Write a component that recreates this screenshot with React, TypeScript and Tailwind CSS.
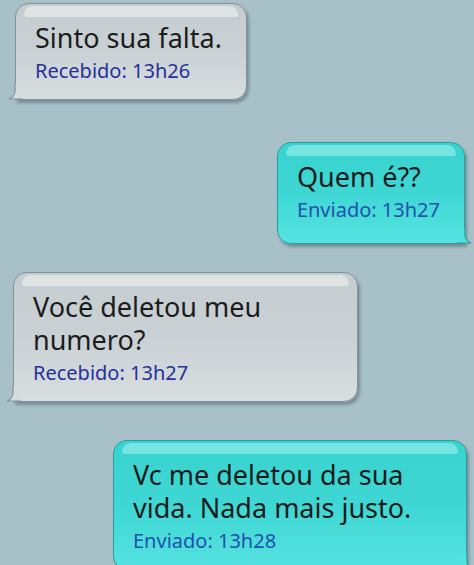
import React from 'react'

type Msg = {
  lines: string[]
  meta: string
  sent: boolean
  width?: string
  pad?: string
}

const messages: Msg[] = [
  { lines: ['Sinto sua falta.'], meta: 'Recebido: 13h26', sent: false },
  { lines: ['Quem é??'], meta: 'Enviado: 13h27', sent: true, pad: 'pb-[20px]' },
  { lines: ['Você deletou meu', 'numero?'], meta: 'Recebido: 13h27', sent: false, width: 'w-[345px]' },
  { lines: ['Vc me deletou da sua', 'vida. Nada mais justo.'], meta: 'Enviado: 13h28', sent: true, width: 'w-[354px]' },
]

function Tail({ sent }: { sent: boolean }) {
  const fill = sent ? '#52e2df' : '#d6dcde'
  const stroke = sent ? '#2a9c9e' : '#7f9399'
  if (sent) {
    return (
      <svg className="absolute -right-[8px] bottom-[-1px]" width="15" height="16" viewBox="0 0 15 16">
        <path d="M0 0 L8 0 L8 8 Q9 13 14 15 L0 15 Z" fill={fill} />
        <path d="M8 0 L8 8 Q9 13 14 15 L0 15" fill="none" stroke={stroke} strokeWidth="1.2" />
      </svg>
    )
  }
  return (
    <svg className="absolute -left-[8px] bottom-[-1px]" width="15" height="16" viewBox="0 0 15 16">
      <path d="M15 0 L7 0 L7 8 Q6 13 1 15 L15 15 Z" fill={fill} />
      <path d="M7 0 L7 8 Q6 13 1 15 L15 15" fill="none" stroke={stroke} strokeWidth="1.2" />
    </svg>
  )
}

function Bubble({ msg }: { msg: Msg }) {
  const base = msg.sent
    ? 'bg-gradient-to-b from-[#38d2cf] via-[#3ed7d4] to-[#55e3e0] border-[#2a9c9e] rounded-br-none'
    : 'bg-gradient-to-b from-[#c5cdd0] via-[#cad1d4] to-[#d8dee0] border-[#7f9399] rounded-bl-none'
  return (
    <div className={`relative border rounded-[14px] shadow-[2px_3px_3px_rgba(60,85,95,0.45)] ${base} ${msg.width ?? ''}`}>
      <div
        className={`absolute left-[8px] right-[8px] top-[2px] h-[11px] rounded-t-[11px] rounded-b-[3px] ${
          msg.sent ? 'bg-[#86e9e5]/80' : 'bg-[#e2e6e8]/85'
        }`}
      />
      <Tail sent={msg.sent} />
      <div className={`relative pl-[19px] pr-[24px] pt-[17px] ${msg.pad ?? 'pb-[15px]'}`}>
        <div className="text-[27px] leading-[33px] text-[#1c1c1c] whitespace-nowrap">
          {msg.lines.map((l, i) => (
            <React.Fragment key={i}>
              {i > 0 && <br />}
              {l}
            </React.Fragment>
          ))}
        </div>
        <div
          className={`text-[20px] leading-[26px] mt-[4px] whitespace-nowrap ${
            msg.sent ? 'text-[#2050b0]' : 'text-[#27309a]'
          }`}
        >
          {msg.meta}
        </div>
      </div>
    </div>
  )
}

export default function App() {
  return (
    <div
      className="w-[474px] h-[565px] overflow-hidden bg-[#a8c0c7] flex flex-col"
      style={{ fontFamily: '"Noto Sans", "Open Sans", sans-serif' }}
    >
      <div className="ml-[15px] mt-[3px] self-start">
        <Bubble msg={messages[0]} />
      </div>
      <div className="mr-[9px] mt-[42px] self-end">
        <Bubble msg={messages[1]} />
      </div>
      <div className="ml-[13px] mt-[28px] self-start">
        <Bubble msg={messages[2]} />
      </div>
      <div className="mr-[7px] mt-[38px] self-end">
        <Bubble msg={messages[3]} />
      </div>
    </div>
  )
}
